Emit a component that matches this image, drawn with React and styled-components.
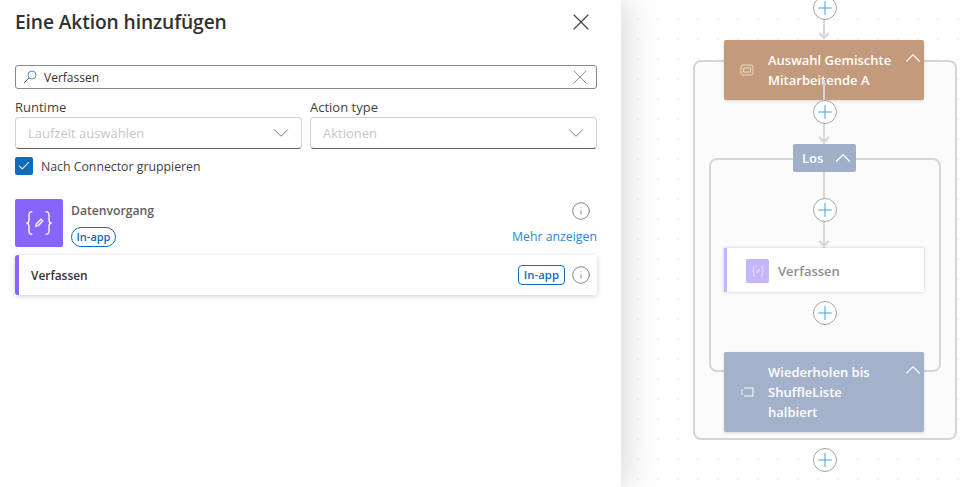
import React from 'react';
import styled, { createGlobalStyle } from 'styled-components';
import { ChevronDown, ChevronUp, X, Check, Info, Plus } from 'lucide-react';

const Global = createGlobalStyle`
  html, body { margin: 0; padding: 0; height: 100%; }
  body { font-family: "Open Sans", "Noto Sans", sans-serif; color: #242424; overflow: hidden; }
  #root { height: 100%; }
`;

const Page = styled.div`
  display: flex;
  width: 975px;
  height: 487px;
  overflow: hidden;
`;

// left side: the add action panel
const Panel = styled.aside`
  width: 621px;
  flex: none;
  box-sizing: border-box;
  padding: 0 24px 0 15px;
  background: #fff;
  position: relative;
  z-index: 2;
  box-shadow: 0 0 36px rgba(0, 0, 0, 0.2);
`;

const TitleRow = styled.div`
  display: flex;
  align-items: center;
  justify-content: space-between;
  height: 43px;
  margin-bottom: 22px;
  padding-right: 2px;
  color: #323130;
  svg { color: #424242; }
`;

const Title = styled.h1`
  margin: 0;
  font-size: 19.2px;
  font-weight: 600;
  letter-spacing: -0.1px;
`;

const SearchBox = styled.div`
  display: flex;
  align-items: center;
  height: 24px;
  box-sizing: border-box;
  border: 1px solid #8a8886;
  border-radius: 3px;
  padding: 0 4px 0 7px;
  font-size: 12px;
  color: #323130;
  span { flex: 1; margin-left: 7px; }
  .clear { color: #605e5c; }
`;

const Filters = styled.div`
  display: grid;
  grid-template-columns: 287px 287px;
  gap: 8px;
  margin-top: 8px;
`;

const Field = styled.div`
  display: flex;
  flex-direction: column;
`;

const FieldLabel = styled.label`
  font-size: 13px;
  line-height: 20px;
  height: 20px;
  color: #424242;
`;

const Select = styled.div`
  height: 32px;
  box-sizing: border-box;
  display: flex;
  align-items: center;
  justify-content: space-between;
  padding: 0 7px 0 12px;
  border: 1px solid #d1d1d1;
  border-bottom-color: #616161;
  border-radius: 4px;
  font-size: 13px;
  color: #c6c6c6;
  svg { color: #757575; }
`;

const CheckRow = styled.div`
  display: flex;
  align-items: center;
  gap: 8px;
  margin-top: 8px;
  height: 18px;
  font-size: 12.3px;
  color: #424242;
`;

const CheckBox = styled.span`
  width: 18px;
  height: 18px;
  border-radius: 2px;
  background: #0f6cbd;
  color: #fff;
  display: flex;
  align-items: center;
  justify-content: center;
`;

const Connector = styled.div`
  display: flex;
  margin-top: 24px;
  height: 48px;
`;

const ConnectorIcon = styled.div`
  width: 48px;
  height: 48px;
  background: #8764fb;
  border-radius: 2px;
  color: #fff;
  display: flex;
  align-items: center;
  justify-content: center;
`;

const ConnectorBody = styled.div`
  flex: 1;
  margin-left: 8px;
  display: flex;
  flex-direction: column;
  justify-content: space-between;
`;

const ConnectorRow = styled.div`
  display: flex;
  align-items: center;
  justify-content: space-between;
`;

const ConnectorName = styled.span`
  font-size: 12.2px;
  font-weight: 600;
  color: #605e5c;
  line-height: 24px;
`;

const Pill = styled.span`
  font-size: ${p => (p.$square ? '11.4px' : '11px')};
  font-weight: 600;
  color: #0f6cbd;
  border: 1px solid #0f6cbd;
  line-height: 18px;
  height: 18px;
  padding: 0 ${p => (p.$square ? '5px' : '4.5px')};
  border-radius: ${p => (p.$square ? '4px' : '10px')};
`;

const MoreLink = styled.a`
  font-size: 12.3px;
  color: #2b88d8;
  line-height: 20px;
`;

const InfoIcon = styled(Info)`
  color: #8a8886;
  margin-right: 6px;
`;

const ActionCard = styled.div`
  margin-top: 8px;
  height: 40px;
  display: flex;
  align-items: center;
  box-sizing: border-box;
  padding-left: 12px;
  border-left: 4px solid #8764fb;
  border-radius: 3px;
  background: #fff;
  box-shadow: 0 1px 5px rgba(0, 0, 0, 0.2);
  font-size: 11.9px;
  font-weight: 600;
  color: #323130;
  span.name { flex: 1; }
  ${Pill} { margin-right: 6px; }
`;

// right side: the flow canvas
const Canvas = styled.main`
  flex: 1;
  position: relative;
  background-color: #fefefe;
  background-image: radial-gradient(circle at 1px 1px, #f3f3f3 1px, transparent 1.5px);
  background-size: 20px 20px;
  background-position: 16px 18px;
`;

// canvas coordinates below are relative to x=621
const Scope = styled.div`
  position: absolute;
  left: ${p => p.$x}px;
  top: ${p => p.$y}px;
  width: ${p => p.$w}px;
  height: ${p => p.$h}px;
  box-sizing: border-box;
  border: 2px solid #d6d6d6;
  border-radius: 8px;
  background: #fbfbfb;
`;

const Node = styled.div`
  position: absolute;
  left: 103px;
  top: ${p => p.$y}px;
  width: 200px;
  height: ${p => p.$h}px;
  box-sizing: border-box;
  display: flex;
  align-items: center;
  padding: 0 5px 0 16px;
  border-radius: 2px;
  background: ${p => p.$bg};
  color: #fff;
  font-size: 13px;
  font-weight: 600;
  line-height: 20px;
  box-shadow: 0 1px 3px rgba(0, 0, 0, 0.14);
`;

const NodeIcon = styled.svg`
  flex: none;
  width: 14px;
  height: 12px;
  margin-right: 14px;
`;

const NodeChevron = styled(ChevronUp)`
  position: absolute;
  right: -2px;
  top: 5px;
  color: #fdf8f3;
`;

const LoopHead = styled.div`
  position: absolute;
  left: 172px;
  top: 144px;
  width: 63px;
  height: 28px;
  box-sizing: border-box;
  display: flex;
  align-items: center;
  justify-content: space-between;
  padding: 0 0 0 9px;
  border-radius: 2px;
  background: #a0b0c9;
  color: #fff;
  font-size: 13px;
  font-weight: 600;
`;

const ComposeNode = styled.div`
  position: absolute;
  left: 103px;
  top: 248px;
  width: 200px;
  height: 44px;
  box-sizing: border-box;
  display: flex;
  align-items: center;
  padding: 1px 0 0 19px;
  background: #fff;
  border-left: 3px solid #c5b6fc;
  box-shadow: 0 0 3px rgba(0, 0, 0, 0.2);
  color: #8e8e93;
  font-size: 13px;
  font-weight: 600;
`;

const ComposeIcon = styled.div`
  width: 23px;
  height: 24px;
  margin-right: 9px;
  border-radius: 2px;
  background: #c5b6fc;
  color: #fff;
  display: flex;
  align-items: center;
  justify-content: center;
`;

const Edge = styled.div`
  position: absolute;
  left: 202px;
  top: ${p => p.$y}px;
  width: 2px;
  height: ${p => p.$h}px;
  background: #d6d6d6;
`;

const Arrow = styled.svg`
  position: absolute;
  left: 197px;
  top: ${p => p.$y}px;
  width: 12px;
  height: 8px;
`;

const AddButton = styled.div`
  position: absolute;
  left: 192px;
  top: ${p => p.$y - 12}px;
  width: 24px;
  height: 24px;
  box-sizing: border-box;
  border: 1px solid #a5a5a5;
  border-radius: 50%;
  background: #fff;
  color: #4a9fdc;
  display: flex;
  align-items: center;
  justify-content: center;
`;

function Glass() {
  return (
    <svg width="14" height="14" viewBox="0 0 14 14" fill="none" stroke="#2f6fc4" strokeWidth="1">
      <circle cx="9" cy="5" r="4" stroke="#5b8fd6" />
      <path d="M6 8l-5 5" />
    </svg>
  );
}

function Braces({ size }) {
  return (
    <svg width={size} height={size} viewBox="0 0 24 24" fill="none" stroke="currentColor" strokeWidth="1">
      <path d="M7 3.500c-2 0-2.500 1-2.500 2.500v3.500c0 1.300-.8 2.500-2 2.500 1.200 0 2 1.200 2 2.500V18c0 1.500.5 2.500 2.500 2.500" />
      <path d="M17 3.500c2 0 2.500 1 2.500 2.500v3.500c0 1.300.8 2.500 2 2.500-1.200 0-2 1.200-2 2.500V18c0 1.500-.5 2.500-2.500 2.500" />
      <path d="M9.500 14.500l.5-2 3.500-3.500 1.500 1.500-3.500 3.500z" fill="currentColor" fillOpacity=".35" strokeWidth=".8" />
    </svg>
  );
}

function Add({ y }) {
  return (
    <AddButton $y={y}>
      <Plus size={22} strokeWidth={1.1} />
    </AddButton>
  );
}

function ArrowHead({ y }) {
  return (
    <Arrow $y={y} viewBox="0 0 12 8" fill="none" stroke="#d6d6d6" strokeWidth="2">
      <path d="M1 1l5 5 5-5" />
    </Arrow>
  );
}

export default function App() {
  return (
    <Page>
      <Global />
      <Panel>
        <TitleRow>
          <Title>Eine Aktion hinzufügen</Title>
          <X size={28} strokeWidth={1} />
        </TitleRow>

        <SearchBox>
          <Glass />
          <span>Verfassen</span>
          <X className="clear" size={24} strokeWidth={0.7} />
        </SearchBox>

        <Filters>
          <Field>
            <FieldLabel>Runtime</FieldLabel>
            <Select>
              Laufzeit auswählen
              <ChevronDown size={26} strokeWidth={0.9} />
            </Select>
          </Field>
          <Field>
            <FieldLabel>Action type</FieldLabel>
            <Select>
              Aktionen
              <ChevronDown size={26} strokeWidth={0.9} />
            </Select>
          </Field>
        </Filters>

        <CheckRow>
          <CheckBox><Check size={14} strokeWidth={1.8} /></CheckBox>
          Nach Connector gruppieren
        </CheckRow>

        <Connector>
          <ConnectorIcon><Braces size={32} /></ConnectorIcon>
          <ConnectorBody>
            <ConnectorRow>
              <ConnectorName>Datenvorgang</ConnectorName>
              <InfoIcon size={20} strokeWidth={1.2} />
            </ConnectorRow>
            <ConnectorRow>
              <Pill>In-app</Pill>
              <MoreLink>Mehr anzeigen</MoreLink>
            </ConnectorRow>
          </ConnectorBody>
        </Connector>

        <ActionCard>
          <span className="name">Verfassen</span>
          <Pill $square>In-app</Pill>
          <InfoIcon size={20} strokeWidth={1.2} />
        </ActionCard>
      </Panel>

      <Canvas>
        <Scope $x={72} $y={60} $w={264} $h={380} />
        <Scope $x={88} $y={158} $w={232} $h={214} />

        <Edge $y={18} $h={20} />
        <ArrowHead y={32} />
        <Node $y={40} $h={60} $bg="#c49a7c">
          <NodeIcon viewBox="0 0 14 12" fill="none" stroke="#ecd9c9" strokeWidth="1">
            <rect x="1" y="1" width="12" height="10" rx="2" />
            <rect x="3.500" y="4" width="7" height="4" />
          </NodeIcon>
          <span>Auswahl Gemischte<br />Mitarbeitende A</span>
          <NodeChevron size={26} strokeWidth={1} />
        </Node>
        <Edge $y={80} $h={64} />
        <ArrowHead y={136} />
        <LoopHead>
          Los
          <ChevronUp size={26} strokeWidth={1} />
        </LoopHead>
        <Edge $y={172} $h={76} />
        <ArrowHead y={240} />
        <ComposeNode>
          <ComposeIcon><Braces size={14} /></ComposeIcon>
          Verfassen
        </ComposeNode>
        <Node $y={352} $h={80} $bg="#a3b2ca">
          <NodeIcon viewBox="0 0 14 12" fill="none" stroke="#fff" strokeWidth="1">
            <path d="M4 2h9v8H4" />
            <path d="M1 4h2M1 8h2M1 6h1" />
          </NodeIcon>
          <span>Wiederholen bis<br />ShuffleListe<br />halbiert</span>
          <NodeChevron size={26} strokeWidth={1} />
        </Node>

        <Add y={8} />
        <Add y={112} />
        <Add y={210} />
        <Add y={313} />
        <Add y={460} />
      </Canvas>
    </Page>
  );
}
